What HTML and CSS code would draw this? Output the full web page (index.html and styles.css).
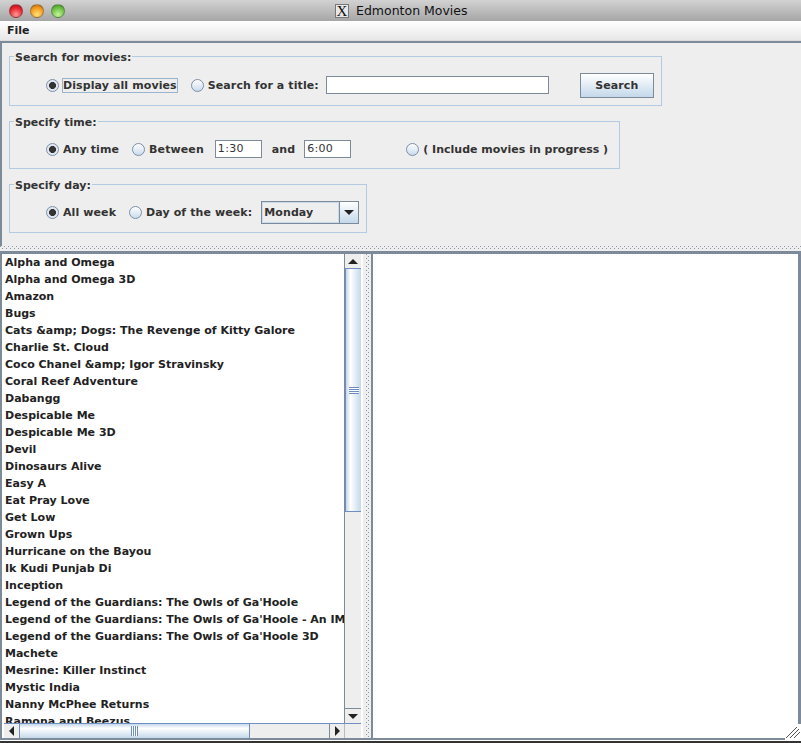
FILE: index.html
```html
<!DOCTYPE html>
<html lang="en">
<head>
<meta charset="UTF-8">
<title>Edmonton Movies</title>
<link rel="stylesheet" href="styles.css">
</head>
<body>

<div class="window">
  <div class="titlebar">
    <div class="lights">
      <span class="light red"></span>
      <span class="light amber"></span>
      <span class="light green"></span>
    </div>
    <div class="title"><span class="x-icon">X</span>Edmonton Movies</div>
  </div>

  <div class="menubar"><span>File</span></div>

  <div class="filters">
    <fieldset class="group group-search">
      <legend>Search for movies:</legend>
      <div class="row">
        <span class="radio on"></span><span class="label focused">Display all movies</span>
        <span class="radio second"></span><span class="label">Search for a title:</span>
        <span class="textbox title-box"></span>
        <span class="button">Search</span>
      </div>
    </fieldset>

    <fieldset class="group group-time">
      <legend>Specify time:</legend>
      <div class="row">
        <span class="radio on"></span><span class="label">Any time</span>
        <span class="radio between"></span><span class="label">Between</span>
        <span class="textbox time-box from">1:30</span>
        <span class="label and">and</span>
        <span class="textbox time-box">6:00</span>
        <span class="radio progress"></span><span class="label note">( Include movies in progress )</span>
      </div>
    </fieldset>

    <fieldset class="group group-day">
      <legend>Specify day:</legend>
      <div class="row">
        <span class="radio on"></span><span class="label">All week</span>
        <span class="radio week"></span><span class="label">Day of the week:</span>
        <span class="combo">
          <span class="combo-value">Monday</span>
          <span class="combo-arrow"><span class="arrow down"></span></span>
        </span>
      </div>
    </fieldset>
  </div>

  <div class="split-h"></div>

  <div class="panes">
    <div class="list-pane">
      <div class="list-top">
        <ul class="movies">
          <li>Alpha and Omega</li>
          <li>Alpha and Omega 3D</li>
          <li>Amazon</li>
          <li>Bugs</li>
          <li>Cats &amp;amp; Dogs: The Revenge of Kitty Galore</li>
          <li>Charlie St. Cloud</li>
          <li>Coco Chanel &amp;amp; Igor Stravinsky</li>
          <li>Coral Reef Adventure</li>
          <li>Dabangg</li>
          <li>Despicable Me</li>
          <li>Despicable Me 3D</li>
          <li>Devil</li>
          <li>Dinosaurs Alive</li>
          <li>Easy A</li>
          <li>Eat Pray Love</li>
          <li>Get Low</li>
          <li>Grown Ups</li>
          <li>Hurricane on the Bayou</li>
          <li>Ik Kudi Punjab Di</li>
          <li>Inception</li>
          <li>Legend of the Guardians: The Owls of Ga'Hoole</li>
          <li>Legend of the Guardians: The Owls of Ga'Hoole - An IMAX 3D Experience</li>
          <li>Legend of the Guardians: The Owls of Ga'Hoole 3D</li>
          <li>Machete</li>
          <li>Mesrine: Killer Instinct</li>
          <li>Mystic India</li>
          <li>Nanny McPhee Returns</li>
          <li>Ramona and Beezus</li>
        </ul>
        <div class="vscroll">
          <span class="sb-btn"><span class="arrow up"></span></span>
          <span class="v-thumb"><span class="v-grip"></span></span>
          <span class="v-track"></span>
          <span class="sb-btn bottom"><span class="arrow down"></span></span>
        </div>
      </div>
      <div class="hscroll">
        <span class="sb-btn side"><span class="arrow left"></span></span>
        <span class="h-thumb"><span class="h-grip"></span></span>
        <span class="h-track"></span>
        <span class="sb-btn side end"><span class="arrow right"></span></span>
        <span class="corner"></span>
      </div>
    </div>
    <div class="split-v"></div>
    <div class="detail"></div>
  </div>

  <div class="bottom-edge">
    <svg class="grow-box" width="16" height="17" viewBox="0 0 16 17">
      <path d="M1 14 L12 3 M5 14 L14 5 M9 14 L15 8" stroke="#555555" stroke-width="1" fill="none"/>
    </svg>
  </div>
</div>

</body>
</html>
```

FILE: styles.css
```css
/* Global Styles */
* {
  box-sizing: border-box;
}

html, body {
  margin: 0;
  padding: 0;
}

body {
  width: 801px;
  height: 743px;
  overflow: hidden;
  background-color: #eeeeee;
  font-family: 'DejaVu Sans', sans-serif;
  font-size: 11px;
  font-weight: bold;
  color: #333333;
}

.window {
  display: flex;
  flex-direction: column;
  height: 743px;
  border-left: 2px solid #7c8a99;
}

/* Title bar */
.titlebar {
  display: flex;
  align-items: center;
  height: 21px;
  margin-left: -2px;
  background: linear-gradient(#d2d2d2, #a6a6a6);
}

.lights {
  display: flex;
  gap: 7px;
  margin-left: 9px;
}

.light {
  width: 14px;
  height: 14px;
  border-radius: 50%;
  border: 1px solid rgba(80, 80, 80, 0.45);
}

.red {
  background: radial-gradient(circle at 50% 80%, #ff9a9a, #e8232c 60%, #a80f18);
}

.amber {
  background: radial-gradient(circle at 50% 80%, #ffe27a, #f29a1c 60%, #b5640c);
}

.green {
  background: radial-gradient(circle at 50% 80%, #c6f59a, #6cc044 60%, #3d8a24);
}

.title {
  display: flex;
  align-items: center;
  margin-left: 270px;
  font-size: 12.5px;
  font-weight: normal;
  color: #111111;
}

.x-icon {
  width: 14px;
  height: 14px;
  margin-right: 7px;
  background-color: #e8e8e8;
  border: 1px solid #777777;
  font-family: 'Liberation Serif', serif;
  font-size: 15px;
  line-height: 12px;
  text-align: center;
}

/* Menu */
.menubar {
  height: 22px;
  margin-left: -2px;
  padding: 3px 0 0 7px;
  background: linear-gradient(#ffffff, #e6e6e6);
  border-bottom: 2px solid #7c8a99;
  box-shadow: inset 0 -1px 0 #dddddd;
  color: #222222;
}

/* Filter groups */
.filters {
  height: 203px;
  padding: 4px 0 0 7px;
}

.group {
  display: block;
  margin: 0 0 6px;
  padding: 0;
  border: 1px solid #b3cbe2;
  min-width: 0;
}

.group legend {
  margin-left: 4px;
  padding: 4px 1px 0;
  line-height: 14px;
  color: #333333;
}

.group-search {
  width: 653px;
  height: 59px;
}

.group-time {
  width: 611px;
  height: 57px;
}

.group-day {
  width: 358px;
  height: 58px;
  margin-bottom: 0;
}

.row {
  display: flex;
  align-items: center;
  height: 32px;
  margin-top: 3px;
  padding-left: 36px;
}

.group-search .row {
  margin-top: 4px;
}

.radio {
  flex: none;
  width: 13px;
  height: 13px;
  margin-right: 4px;
  border-radius: 50%;
  border: 1px solid #7c8fa8;
  background: linear-gradient(#ffffff, #c9dbec);
}

.radio.on {
  background: radial-gradient(circle, #333333 0, #333333 3.2px, #dfe8f1 3.8px);
}

.label {
  white-space: nowrap;
  letter-spacing: 0.1px;
}

.label.note {
  letter-spacing: 0;
}

.focused {
  outline: 1px solid #9ab4cd;
  outline-offset: 0;
}

.radio.second {
  margin-left: 14px;
}

.title-box {
  width: 223px;
  margin-left: 7px;
}

.textbox {
  flex: none;
  height: 18px;
  padding-left: 2px;
  background-color: #ffffff;
  border: 1px solid #7c8a99;
  font-weight: normal;
  line-height: 16px;
  letter-spacing: 0.3px;
}

.button {
  flex: none;
  width: 74px;
  height: 25px;
  margin-left: 31px;
  background: linear-gradient(#ffffff, #c4d8ea);
  border: 1px solid #7c8a99;
  line-height: 23px;
  text-align: center;
  letter-spacing: 0.1px;
}

.radio.between {
  margin-left: 13px;
}

.time-box {
  width: 47px;
}

.from {
  margin-left: 11px;
}

.and {
  margin: 0 9px 0 10px;
}

.radio.progress {
  margin-left: 55px;
}

.radio.week {
  margin-left: 13px;
}

.combo {
  flex: none;
  display: flex;
  width: 98px;
  height: 23px;
  margin-left: 9px;
  border: 1px solid #7c8a99;
  background-color: #eeeeee;
}

.combo-value {
  flex: 1;
  padding-left: 2px;
  line-height: 21px;
  letter-spacing: 0.1px;
  box-shadow: inset 1px 1px 0 #c9dbec, inset -1px -1px 0 #c9dbec;
}

.combo-arrow {
  display: flex;
  align-items: center;
  justify-content: center;
  width: 19px;
  border-left: 1px solid #7c8a99;
  background: linear-gradient(#ffffff, #c4d8ea);
}

/* Arrows */
.arrow {
  display: block;
  width: 0;
  height: 0;
  border-style: solid;
  border-color: transparent;
}

.arrow.down {
  border-width: 5px 5px 0;
  border-top-color: #222222;
}

.arrow.up {
  border-width: 0 5px 5px;
  border-bottom-color: #222222;
}

.arrow.left {
  border-width: 5px 5px 5px 0;
  border-right-color: #222222;
}

.arrow.right {
  border-width: 5px 0 5px 5px;
  border-left-color: #222222;
}

/* Splitters */
.split-h {
  height: 8px;
  margin-left: -2px;
  background-color: #eeeeee;
  background-image:
    linear-gradient(90deg, #8a98a8 1px, transparent 1px),
    linear-gradient(90deg, #8a98a8 1px, transparent 1px);
  background-repeat: repeat-x;
  background-size: 4px 1px;
  background-position: 0 0, 2px 2px;
  border-bottom: 3px solid #7c8a99;
}

.panes {
  display: flex;
  flex: 1;
  min-height: 0;
  padding-left: 2px;
  background-color: #ffffff;
}

.list-pane {
  display: flex;
  flex-direction: column;
  width: 357px;
}

.list-top {
  display: flex;
  height: 469px;
}

.movies {
  flex: 1;
  min-width: 0;
  margin: 0;
  padding: 0;
  list-style: none;
  overflow: hidden;
  background-color: #ffffff;
  border-right: 1px solid #7c8a99;
}

.movies li {
  height: 17px;
  padding-left: 1px;
  line-height: 17px;
  white-space: nowrap;
  color: #222222;
}

.vscroll {
  display: flex;
  flex-direction: column;
  flex: none;
  width: 16px;
  background-color: #eeeeee;
}

.sb-btn {
  display: flex;
  flex: none;
  align-items: center;
  justify-content: center;
  height: 15px;
  background-color: #eeeeee;
  border-bottom: 1px solid #6f8fc4;
}

.sb-btn.bottom {
  border-top: 1px solid #7c8a99;
  border-bottom: 0;
}

.v-thumb {
  display: flex;
  flex: none;
  align-items: center;
  justify-content: center;
  height: 243px;
  background: linear-gradient(90deg, #c4d8ea, #ffffff 30%, #c4d8ea);
  border: 1px solid #6f8fc4;
  border-width: 0 0 1px 1px;
}

.v-grip {
  width: 10px;
  height: 7px;
  background: repeating-linear-gradient(#6f8fc4 0 1px, #ffffff 1px 2px);
}

.v-track {
  flex: 1;
}

.hscroll {
  display: flex;
  height: 16px;
  background-color: #eeeeee;
  border-top: 1px solid #6f8fc4;
}

.sb-btn.side {
  width: 16px;
  height: auto;
  border-bottom: 0;
  border-right: 1px solid #6f8fc4;
}

.sb-btn.end {
  border-right: 1px solid #bbbbbb;
  border-left: 1px solid #7c8a99;
}

.h-thumb {
  display: flex;
  flex: none;
  align-items: center;
  justify-content: center;
  width: 230px;
  background: linear-gradient(#c4d8ea, #ffffff 30%, #c4d8ea);
  border-right: 1px solid #6f8fc4;
}

.h-grip {
  width: 7px;
  height: 10px;
  background: repeating-linear-gradient(90deg, #6f8fc4 0 1px, #ffffff 1px 2px);
}

.h-track {
  flex: 1;
}

.corner {
  width: 16px;
}

.split-v {
  flex: none;
  width: 12px;
  background-color: #eeeeee;
  background-image:
    linear-gradient(#8a98a8 1px, transparent 1px),
    linear-gradient(#8a98a8 1px, transparent 1px);
  background-repeat: repeat-y;
  background-size: 1px 4px;
  background-position: 3px 0, 5px 2px;
  border-left: 2px solid #ffffff;
  border-right: 2px solid #7c8a99;
}

.detail {
  flex: 1;
  background-color: #ffffff;
  border-right: 3px solid #7c8a99;
}

.bottom-edge {
  position: relative;
  height: 5px;
  margin-left: -2px;
  background-color: #ffffff;
  border-top: 2px solid #7c8a99;
  border-bottom: 2px solid #333333;
}

.grow-box {
  position: absolute;
  right: 0;
  bottom: 0;
  background-color: #ffffff;
}
```
